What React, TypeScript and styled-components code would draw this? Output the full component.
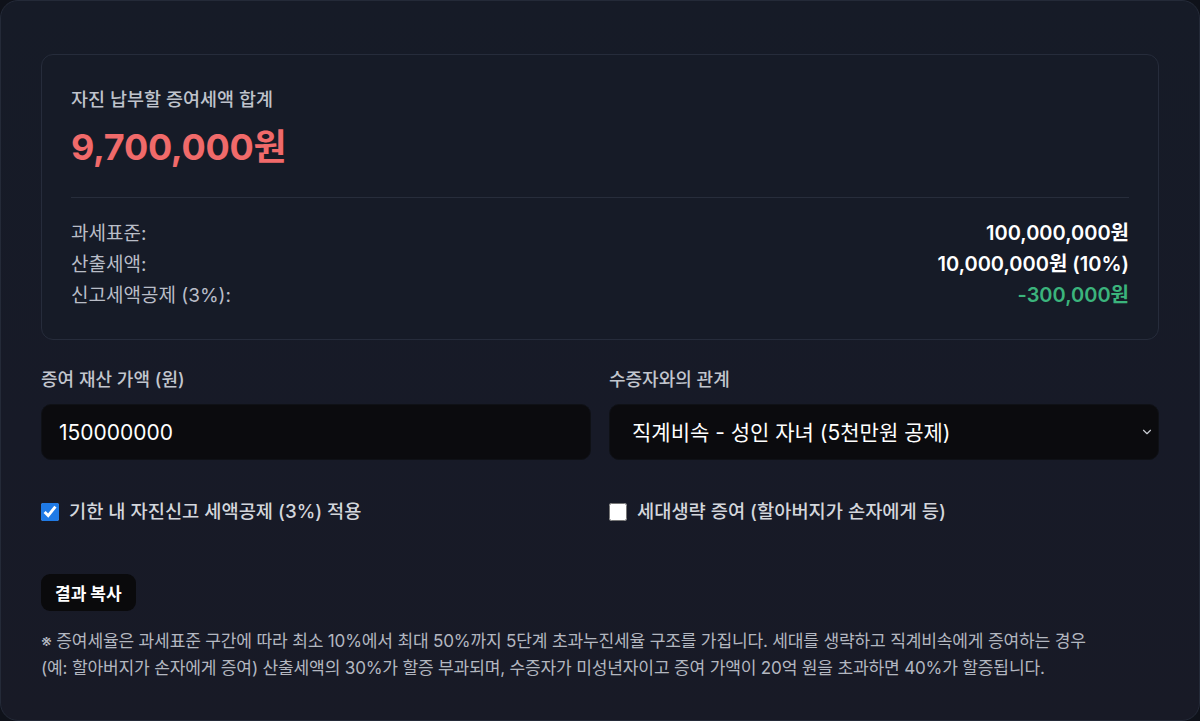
import React from 'react';
import styled, { createGlobalStyle } from 'styled-components';

const GlobalStyle = createGlobalStyle`
  html, body {
    margin: 0;
    padding: 0;
    background: #0f121a;
  }
  body {
    font-family: Inter, "Noto Sans CJK KR", sans-serif;
    -webkit-font-smoothing: antialiased;
  }
  * { box-sizing: border-box; }
`;

const Card = styled.div`
  width: 1200px;
  height: 721px;
  padding: 53px 40px 0;
  border: 1px solid #242a38;
  border-radius: 18px;
  background: linear-gradient(180deg, #161b27 0%, #171a27 60%, #181a26 100%);
  color: #e6e8ec;
`;

const ResultBox = styled.section`
  border: 1px solid #262c3b;
  border-radius: 12px;
  padding: 32px 29px 28px;
  background: #161b27;
`;

const ResultTitle = styled.div`
  font-size: 18.5px;
  line-height: 24px;
  font-weight: 500;
  color: #bfc3cc;
`;

const Total = styled.div`
  margin-top: 15px;
  font-size: 36px;
  line-height: 43px;
  font-weight: 700;
  color: #f06a6a;
  letter-spacing: -0.3px;
`;

const Divider = styled.hr`
  margin: 28px 0 20px;
  border: 0;
  border-top: 1px solid #272d3b;
`;

const Row = styled.div`
  display: flex;
  justify-content: space-between;
  align-items: baseline;
  line-height: 31px;
`;

const RowLabel = styled.span`
  font-size: 19px;
  color: #b9bdc7;
`;

const RowValue = styled.span<{ $tone?: 'green' }>`
  font-size: 20px;
  font-weight: 600;
  color: ${p => (p.$tone === 'green' ? '#3bb47c' : '#ffffff')};
`;

const FormGrid = styled.div`
  display: grid;
  grid-template-columns: 1fr 1fr;
  column-gap: 18px;
  margin-top: 28px;
`;

const Field = styled.div`
  display: flex;
  flex-direction: column;
  gap: 12px;
`;

const FieldLabel = styled.label`
  font-size: 18px;
  line-height: 24px;
  font-weight: 500;
  color: #c2c6ce;
`;

const TextInput = styled.input`
  height: 56px;
  border: 1px solid #0f1116;
  border-radius: 10px;
  background: #0b0b0e;
  color: #ffffff;
  font-family: inherit;
  font-size: 21px;
  padding: 0 17px;
  outline: none;
`;

const SelectWrap = styled.div`
  position: relative;
`;

const Select = styled.select`
  width: 100%;
  height: 56px;
  appearance: none;
  border: 1px solid #0f1116;
  border-radius: 10px;
  background: #0b0b0e;
  color: #ffffff;
  font-family: inherit;
  font-size: 21px;
  padding: 0 40px 0 22px;
  outline: none;
`;

const Chevron = styled.svg`
  position: absolute;
  right: 5px;
  top: 50%;
  transform: translateY(-50%);
  pointer-events: none;
`;

const CheckRow = styled.label`
  display: flex;
  align-items: center;
  gap: 10px;
  margin-top: 39px;
  font-size: 18.7px;
  line-height: 26px;
  font-weight: 500;
  color: #d3d6dc;

  input {
    width: 18px;
    height: 18px;
    margin: 0;
    accent-color: #1f7ae6;
    color-scheme: light;
  }
`;

const CopyButton = styled.button`
  margin-top: 49px;
  height: 37px;
  padding: 0 14px;
  border: 0;
  border-radius: 9px;
  background: #0a0a0c;
  color: #ffffff;
  font-family: inherit;
  font-size: 17px;
  font-weight: 700;
  cursor: pointer;
`;

const Note = styled.p`
  margin: 16px 0 0;
  font-size: 17.1px;
  line-height: 27px;
  color: #b3b7c0;
  letter-spacing: -0.2px;
  word-break: keep-all;
`;

const App: React.FC = () => {
  return (
    <>
      <GlobalStyle />
      <Card>
        <ResultBox>
          <ResultTitle>자진 납부할 증여세액 합계</ResultTitle>
          <Total>9,700,000원</Total>
          <Divider />
          <Row>
            <RowLabel>과세표준:</RowLabel>
            <RowValue>100,000,000원</RowValue>
          </Row>
          <Row>
            <RowLabel>산출세액:</RowLabel>
            <RowValue>10,000,000원 (10%)</RowValue>
          </Row>
          <Row>
            <RowLabel>신고세액공제 (3%):</RowLabel>
            <RowValue $tone="green">-300,000원</RowValue>
          </Row>
        </ResultBox>

        <FormGrid>
          <Field>
            <FieldLabel>증여 재산 가액 (원)</FieldLabel>
            <TextInput defaultValue="150000000" />
          </Field>
          <Field>
            <FieldLabel>수증자와의 관계</FieldLabel>
            <SelectWrap>
              <Select defaultValue="adult">
                <option value="adult">직계비속 - 성인 자녀 (5천만원 공제)</option>
              </Select>
              <Chevron width="14" height="14" viewBox="0 0 24 24" fill="none" stroke="#c9ccd2" strokeWidth="2" strokeLinecap="round" strokeLinejoin="round">
                <path d="M6 9l6 6 6-6" />
              </Chevron>
            </SelectWrap>
          </Field>
          <CheckRow>
            <input type="checkbox" defaultChecked />
            기한 내 자진신고 세액공제 (3%) 적용
          </CheckRow>
          <CheckRow>
            <input type="checkbox" />
            세대생략 증여 (할아버지가 손자에게 등)
          </CheckRow>
        </FormGrid>

        <CopyButton>결과 복사</CopyButton>
        <Note>
          ※ 증여세율은 과세표준 구간에 따라 최소 10%에서 최대 50%까지 5단계 초과누진세율 구조를 가집니다. 세대를 생략하고 직계비속에게 증여하는 경우
          <br />
          (예: 할아버지가 손자에게 증여) 산출세액의 30%가 할증 부과되며, 수증자가 미성년자이고 증여 가액이 20억 원을 초과하면 40%가 할증됩니다.
        </Note>
      </Card>
    </>
  );
};

export default App;
